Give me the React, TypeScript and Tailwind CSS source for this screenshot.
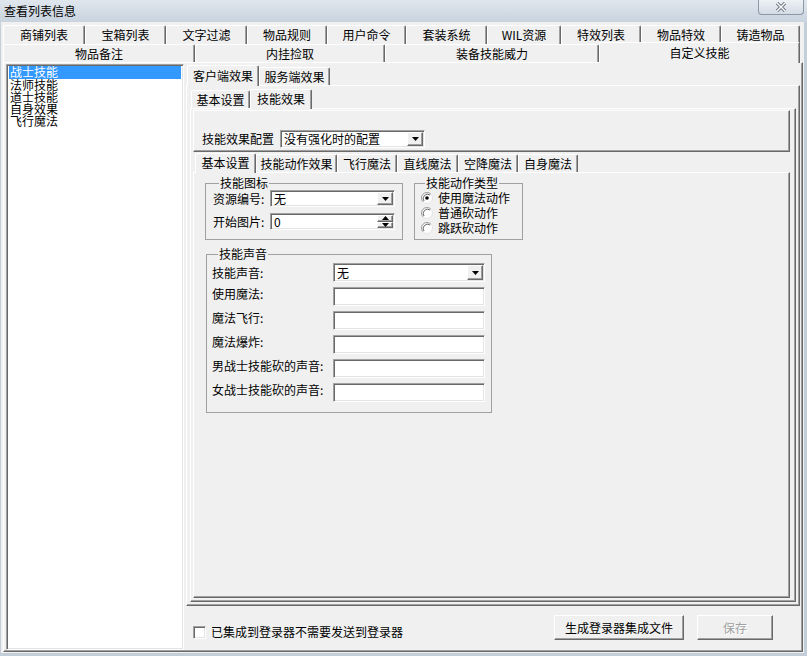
import React from 'react';

const FONT = "font-['Noto_Sans_CJK_SC','Noto_Sans',sans-serif]";

// classic 3D borders
const PANEL =
  'border border-t-white border-l-white border-r-[#696969] border-b-[#696969] shadow-[inset_-1px_-1px_0_#a0a0a0]';
const SUNKEN =
  'border border-t-[#a0a0a0] border-l-[#a0a0a0] border-r-white border-b-white shadow-[inset_1px_1px_0_#696969,inset_-1px_-1px_0_#e3e3e3]';
const TAB =
  'flex items-center justify-center border-t border-l border-r border-t-white border-l-white border-r-[#696969] shadow-[inset_-1px_0_0_#a0a0a0] rounded-t-[2px] whitespace-nowrap';

type TabDef = { label: string; w: string };

function TabRow({
  tabs,
  active = -1,
  h = 'h-[18px]',
  activeH = 'h-[21px]',
  className = '',
}: {
  tabs: TabDef[];
  active?: number;
  h?: string;
  activeH?: string;
  className?: string;
}) {
  return (
    <div className={`flex items-end shrink-0 ${h} ${className}`}>
      {tabs.map((t, i) =>
        i === active ? (
          <div key={t.label} className={`${t.w} ${activeH} ${TAB} -mb-px relative z-10 bg-[#f0f0f0] pb-[1px]`}>
            {t.label}
          </div>
        ) : (
          <div key={t.label} className={`${t.w} h-full ${TAB}`}>
            {t.label}
          </div>
        )
      )}
    </div>
  );
}

function DropButton() {
  return (
    <div className={`w-[16px] bg-[#f0f0f0] ${PANEL} flex items-center justify-center`}>
      <svg width="7" height="4" viewBox="0 0 7 4">
        <polygon points="0,0 7,0 3.5,4" fill="#000" />
      </svg>
    </div>
  );
}

function Combo({ value, className }: { value: string; className: string }) {
  return (
    <div className={`${className} ${SUNKEN} bg-white p-[1px] flex`}>
      <div className="flex-1 flex items-center pl-[2px] leading-[12px]">{value}</div>
      <DropButton />
    </div>
  );
}

function Spin({ value, className }: { value: string; className: string }) {
  return (
    <div className={`${className} ${SUNKEN} bg-white p-[1px] flex`}>
      <div className="flex-1 flex items-center pl-[2px] leading-[12px]">{value}</div>
      <div className="w-[16px] flex flex-col">
        <div className={`flex-1 bg-[#f0f0f0] ${PANEL} flex items-center justify-center`}>
          <svg width="7" height="4" viewBox="0 0 7 4">
            <polygon points="3.5,0 7,4 0,4" fill="#000" />
          </svg>
        </div>
        <div className={`flex-1 bg-[#f0f0f0] ${PANEL} flex items-center justify-center`}>
          <svg width="7" height="4" viewBox="0 0 7 4">
            <polygon points="0,0 7,0 3.5,4" fill="#000" />
          </svg>
        </div>
      </div>
    </div>
  );
}

function Radio({ checked, label }: { checked?: boolean; label: string }) {
  return (
    <div className="h-[15px] flex items-center gap-[5px]">
      <svg width="12" height="12" viewBox="0 0 12 12">
        <circle cx="6" cy="6" r="5.5" fill="#fff" stroke="#e3e3e3" />
        <path d="M2.1 9.9 A5.5 5.5 0 0 1 9.9 2.1" fill="none" stroke="#a0a0a0" />
        <path d="M3 9 A4.3 4.3 0 0 1 9 3" fill="none" stroke="#696969" />
        {checked && <circle cx="6" cy="6" r="1.8" fill="#000" />}
      </svg>
      <span className="leading-[12px]">{label}</span>
    </div>
  );
}

const mainRow1: TabDef[] = [
  { label: '商铺列表', w: 'w-[82px]' },
  { label: '宝箱列表', w: 'w-[81px]' },
  { label: '文字过滤', w: 'w-[81px]' },
  { label: '物品规则', w: 'w-[80px]' },
  { label: '用户命令', w: 'w-[79px]' },
  { label: '套装系统', w: 'w-[81px]' },
  { label: 'WIL资源', w: 'w-[74px]' },
  { label: '特效列表', w: 'w-[80px]' },
  { label: '物品特效', w: 'w-[80px]' },
  { label: '铸造物品', w: 'w-[79px]' },
];

const mainRow2: TabDef[] = [
  { label: '物品备注', w: 'w-[192px]' },
  { label: '内挂捡取', w: 'w-[190px]' },
  { label: '装备技能威力', w: 'w-[214px]' },
  { label: '自定义技能', w: 'w-[201px]' },
];

const sideTabs: TabDef[] = [
  { label: '客户端效果', w: 'w-[72px]' },
  { label: '服务端效果', w: 'w-[71px]' },
];

const setTabs: TabDef[] = [
  { label: '基本设置', w: 'w-[59px]' },
  { label: '技能效果', w: 'w-[62px]' },
];

const effectTabs: TabDef[] = [
  { label: '基本设置', w: 'w-[61px]' },
  { label: '技能动作效果', w: 'w-[81px]' },
  { label: '飞行魔法', w: 'w-[60px]' },
  { label: '直线魔法', w: 'w-[61px]' },
  { label: '空降魔法', w: 'w-[60px]' },
  { label: '自身魔法', w: 'w-[60px]' },
];

const skills = ['战士技能', '法师技能', '道士技能', '自身效果', '飞行魔法'];

const sounds = ['使用魔法:', '魔法飞行:', '魔法爆炸:', '男战士技能砍的声音:', '女战士技能砍的声音:'];

export default function App() {
  return (
    <div
      className={`w-[807px] h-[656px] flex flex-col bg-[#c3ced9] text-[12px] leading-[14px] text-black ${FONT} overflow-hidden`}
    >
      {/* title bar */}
      <div className="h-[22px] shrink-0 flex items-start bg-linear-to-b from-[#dfe6ee] to-[#c9d3de]">
        <span className="pl-[4px] pt-[4px] text-[12px] leading-[14px]">查看列表信息</span>
        <div className="ml-auto mr-[3px] w-[46px] h-[15px] rounded-b-[4px] border border-t-0 border-[#8c98a6] bg-linear-to-b from-[#eef2f6] to-[#d3dbe4] flex items-center justify-center">
          <svg width="12" height="10" viewBox="0 0 12 10">
            <path d="M2 1 L10 9 M10 1 L2 9" stroke="#6a7684" strokeWidth="3.2" />
            <path d="M2 1 L10 9 M10 1 L2 9" stroke="#fff" strokeWidth="1.4" />
          </svg>
        </div>
      </div>

      {/* client area */}
      <div className="flex-1 flex flex-col bg-[#f0f0f0] ml-[1px] mr-[3px] mb-[3px] pl-[2px] pr-[1px] pt-[3px] pb-[1px]">
        <TabRow tabs={mainRow1} h="h-[19px]" />
        <TabRow tabs={mainRow2} active={3} activeH="h-[21px]" />

        <div className={`flex-1 flex gap-[2px] px-[2px] pt-[1px] pb-[1px] ${PANEL}`}>
          {/* list */}
          <div className={`w-[178px] bg-white px-[2px] pt-[1px] ${SUNKEN}`}>
            {skills.map((s, i) => (
              <div
                key={s}
                className={
                  i === 0
                    ? 'h-[13px] pl-[1px] leading-[12px] bg-[#3399ff] text-white'
                    : 'h-[12px] pl-[1px] leading-[12px]'
                }
              >
                {s}
              </div>
            ))}
          </div>

          {/* right side */}
          <div className="flex-1 flex flex-col">
            <TabRow tabs={sideTabs} active={0} className="mt-[3px] pl-[1px]" />

            <div className={`h-[521px] shrink-0 flex flex-col ${PANEL}`}>
              <TabRow tabs={setTabs} active={1} activeH="h-[20px]" className="mt-[4px] ml-[4px]" />

              <div className={`flex-1 mx-[3px] mb-[3px] flex flex-col ${PANEL}`}>
                {/* config panel */}
                <div className={`mt-[1px] ml-[2px] w-[597px] h-[42px] shrink-0 flex items-center pl-[8px] pt-[15px] ${PANEL}`}>
                  <span className="mr-[6px]">技能效果配置</span>
                  <Combo value="没有强化时的配置" className="w-[145px] h-[18px]" />
                </div>

                <TabRow tabs={effectTabs} active={0} activeH="h-[20px]" className="mt-[2px] ml-[4px]" />

                <div className={`flex-1 ml-[2px] mr-[5px] mb-[3px] ${PANEL}`}>
                  <div className="mt-[3px] ml-[11px] flex gap-[11px]">
                    <fieldset className="w-[198px] h-[64px] border border-[#a0a0a0] pl-[7px]">
                      <legend className="ml-[6px] px-[1px] leading-[14px]">技能图标</legend>
                      <div className="flex flex-col gap-[6px]">
                        <div className="flex items-center">
                          <span className="w-[57px]">资源编号:</span>
                          <Combo value="无" className="w-[125px] h-[17px]" />
                        </div>
                        <div className="flex items-center">
                          <span className="w-[57px]">开始图片:</span>
                          <Spin value="0" className="w-[125px] h-[17px]" />
                        </div>
                      </div>
                    </fieldset>

                    <fieldset className="w-[109px] h-[64px] border border-[#a0a0a0] pl-[6px]">
                      <legend className="ml-[4px] px-[1px] leading-[14px]">技能动作类型</legend>
                      <div className="flex flex-col">
                        <Radio checked label="使用魔法动作" />
                        <Radio label="普通砍动作" />
                        <Radio label="跳跃砍动作" />
                      </div>
                    </fieldset>
                  </div>

                  <fieldset className="mt-[7px] ml-[12px] w-[286px] h-[166px] border border-[#a0a0a0] pl-[5px]">
                    <legend className="ml-[6px] px-[1px] leading-[14px]">技能声音</legend>
                    <div className="pt-[2px] flex flex-col gap-[5px]">
                      <div className="flex items-center h-[19px]">
                        <span className="w-[121px]">技能声音:</span>
                        <Combo value="无" className="w-[152px] h-[19px]" />
                      </div>
                      {sounds.map((s) => (
                        <div key={s} className="flex items-center h-[19px]">
                          <span className="w-[121px] pb-[6px]">{s}</span>
                          <div className={`w-[152px] h-[19px] bg-white ${SUNKEN}`} />
                        </div>
                      ))}
                    </div>
                  </fieldset>
                </div>
              </div>
            </div>

            {/* bottom bar */}
            <div className="h-[43px] shrink-0 flex items-start pl-[7px] pr-[27px]">
              <div className="mt-[19px] flex items-center gap-[5px]">
                <div className={`w-[13px] h-[13px] bg-white ${SUNKEN}`} />
                <span>已集成到登录器不需要发送到登录器</span>
              </div>
              <div className="ml-auto mt-[9px] flex gap-[13px]">
                <button className={`w-[130px] h-[25px] bg-[#f0f0f0] ${PANEL} flex items-center justify-center`}>
                  生成登录器集成文件
                </button>
                <button
                  disabled
                  className={`w-[76px] h-[25px] bg-[#f0f0f0] ${PANEL} flex items-center justify-center text-[#a0a0a0] [text-shadow:1px_1px_0_#fff]`}
                >
                  保存
                </button>
              </div>
            </div>
          </div>
        </div>
      </div>
    </div>
  );
}
